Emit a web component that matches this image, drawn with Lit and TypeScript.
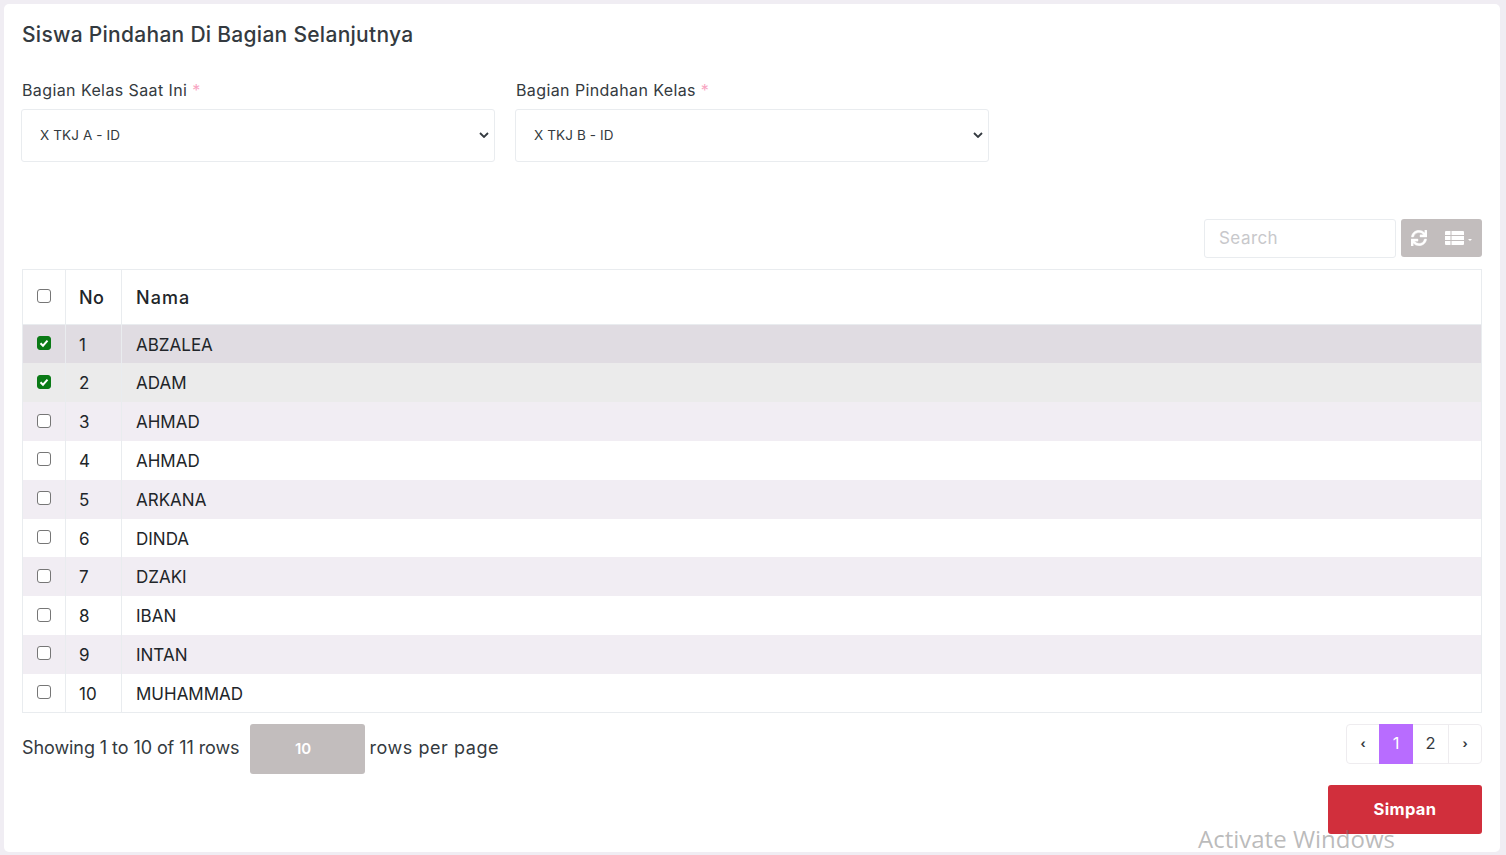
import { LitElement, html, css } from "lit";
import { customElement } from "lit/decorators.js";

const names = ["ABZALEA", "ADAM", "AHMAD", "AHMAD", "ARKANA", "DINDA", "DZAKI", "IBAN", "INTAN", "MUHAMMAD"];

@customElement("app-root")
export class AppRoot extends LitElement {
  static styles = css`
    :host {
      display: block;
      height: 855px;
      box-sizing: border-box;
      padding: 4px 6px 4px 4px;
      background: #f0edf3;
      font-family: Inter, "Noto Sans", sans-serif;
      color: #343a40;
      overflow: hidden;
      position: relative;
    }
    * { box-sizing: border-box; }
    .card {
      height: 848px;
      background: #fff;
      border-radius: 5px;
      padding: 18px 18px 0;
    }
    h1 {
      margin: 0;
      font-size: 21px;
      line-height: 26px;
      font-weight: 500;
      letter-spacing: 0.28px;
      color: #343a40;
    }
    .fields { display: flex; gap: 20px; margin-top: 31px; }
    .field { width: 474px; margin-left: -1px; }
    .field + .field { margin-left: 0; }
    label { display: block; font-size: 16px; line-height: 22px; padding-left: 1px; letter-spacing: 0.4px; }
    label span { color: #f8a5c2; }
    .select {
      height: 53px;
      margin-top: 8px;
      border: 1px solid #e9ecef;
      border-radius: 3px;
      display: flex;
      align-items: center;
      justify-content: space-between;
      padding: 0 5px 1px 18px;
      font-size: 13.5px;
      letter-spacing: 0.1px;
    }
    .select svg { width: 10px; height: 6px; }
    .toolbar { display: flex; justify-content: flex-end; gap: 5px; margin-top: 57px; height: 39px; }
    .search {
      width: 192px;
      height: 39px;
      border: 1px solid #e9ecef;
      border-radius: 3px;
      padding: 0 14px;
      font-size: 17px;
      line-height: 37px;
      letter-spacing: 0.45px;
      color: #c8c8cb;
    }
    .tools {
      width: 81px;
      height: 38px;
      background: #c2bdbd;
      border-radius: 3px;
      display: flex;
      align-items: center;
      padding-left: 10px;
      gap: 18px;
    }
    .caret { width: 0; height: 0; border: 2px solid transparent; border-top-color: #fff; margin: 5px 0 0 -14px; }
    table {
      width: 100%;
      margin-top: 11.2px;
      border-collapse: collapse;
      border: 1px solid #e9ecef;
      color: #212529;
    }
    th, td { border-left: 1px solid #e9ecef; padding: 1px 14px 0 13px; text-align: left; font-size: 17px; }
    th { height: 55px; font-weight: 500; border-bottom: 1px solid #e9ecef; font-size: 18px; padding-left: 14px; }
    th.n { padding-left: 13px; letter-spacing: 0.4px; }
    th.name { letter-spacing: 1.1px; }
    td.name { padding-left: 14px; }
    td { height: 38.8px; }
    .c, th.c { width: 43px; padding: 0; text-align: center; }
    .n { width: 56px; }
    tbody tr:nth-child(odd) { background: #f1edf3; }
    tbody tr.sel1 { background: #e0dce2; }
    tbody tr.sel2 { background: #ebebeb; }
    .box {
      display: block;
      width: 14px;
      height: 14px;
      margin: -3px auto 0;
      border: 1px solid #767676;
      border-radius: 3px;
      background: #fff;
    }
    td .box { margin-top: -2px; }
    .box.on { background: #0a7a16; border-color: #0a7a16; }
    .box svg { display: block; width: 12px; height: 12px; }
    .footer { display: flex; justify-content: space-between; margin-top: 10.8px; }
    .info { display: flex; align-items: center; height: 50px; font-size: 18px; padding-bottom: 3px; }
    .showing { letter-spacing: -0.08px; }
    .perpage { letter-spacing: 0.55px; }
    .size {
      width: 115px;
      height: 50px;
      margin: 0 5px 0 10px;
      background: #c2bdbd;
      border-radius: 3px;
      color: #fff;
      font-size: 15px;
      font-weight: 600;
      display: flex;
      align-items: center;
      justify-content: center;
      padding-right: 8px;
      align-self: flex-start;
    }
    .pages {
      display: flex;
      height: 40px;
      border: 1px solid #eeecef;
      border-radius: 4px;
      font-size: 16.5px;
    }
    .pages div { display: flex; align-items: center; justify-content: center; height: 38px; padding-bottom: 1px; }
    .pages .a { width: 32px; font-size: 12px; font-weight: 700; }
    .pages .on { width: 34px; height: 40px; margin-top: -1px; background: #b86cff; color: #fff; }
    .pages .two { width: 36px; border-right: 1px solid #eeecef; }
    .actions { display: flex; justify-content: flex-end; margin-top: 11px; }
    button {
      width: 154px;
      height: 49px;
      border: 0;
      border-radius: 3px;
      background: #d12f3c;
      color: #fff;
      font: 700 16.5px Inter, sans-serif;
      letter-spacing: 0.35px;
    }
    .wm {
      position: absolute;
      left: 1198px;
      top: 822px;
      font-family: "Open Sans", sans-serif;
      font-size: 24px;
      line-height: 33px;
      color: rgba(120, 120, 120, 0.5);
      white-space: nowrap;
      pointer-events: none;
    }
  `;

  render() {
    const chev = html`<svg viewBox="0 0 10 6"><path d="M1 1l4 4 4-4" fill="none" stroke="#343a40" stroke-width="1.8"/></svg>`;
    const box = (on: boolean) => html`<span class="box ${on ? "on" : ""}">${on ? html`<svg viewBox="0 0 12 12"><path d="M2.5 6.200l2.500 2.500 4.500-5" fill="none" stroke="#fff" stroke-width="2"/></svg>` : ""}</span>`;
    return html`
      <div class="card">
        <h1>Siswa Pindahan Di Bagian Selanjutnya</h1>
        <div class="fields">
          <div class="field"><label>Bagian Kelas Saat Ini <span>*</span></label><div class="select">X TKJ A - ID ${chev}</div></div>
          <div class="field"><label>Bagian Pindahan Kelas <span>*</span></label><div class="select">X TKJ B - ID ${chev}</div></div>
        </div>
        <div class="toolbar">
          <div class="search">Search</div>
          <div class="tools">
            <svg width="16" height="16" viewBox="0 0 512 512"><path fill="#fff" stroke="#fff" stroke-width="14" d="M440.65 12.57l4 82.77A247.16 247.16 0 0 0 255.83 8C134.73 8 33.91 94.92 12.29 209.82A12 12 0 0 0 24.09 224h49.05a12 12 0 0 0 11.67-9.26 175.91 175.91 0 0 1 317-56.94l-101.46-4.86a12 12 0 0 0-12.57 12v47.41a12 12 0 0 0 12 12H500a12 12 0 0 0 12-12V12a12 12 0 0 0-12-12h-47.37a12 12 0 0 0-11.98 12.57zM255.83 432a175.61 175.61 0 0 1-146-77.8l101.8 4.87a12 12 0 0 0 12.57-12v-47.4a12 12 0 0 0-12-12H12a12 12 0 0 0-12 12V500a12 12 0 0 0 12 12h47.35a12 12 0 0 0 12-12.6l-4.15-82.57A247.17 247.17 0 0 0 255.83 504c121.11 0 221.93-86.92 243.55-201.82a12 12 0 0 0-11.8-14.18h-49.05a12 12 0 0 0-11.67 9.26A175.86 175.86 0 0 1 255.83 432z"/></svg>
            <svg width="19" height="14" viewBox="0 0 19 14"><path fill="#fff" d="M1 0h4.500v4H0V1a1 1 0 0 1 1-1zM6.500 0H18a1 1 0 0 1 1 1v3H6.500zM0 5h5.500v4H0zM6.500 5H19v4H6.500zM0 10h5.500v4H1a1 1 0 0 1-1-1zM6.500 10H19v3a1 1 0 0 1-1 1H6.500z"/></svg>
            <span class="caret"></span>
          </div>
        </div>
        <table>
          <thead><tr><th class="c">${box(false)}</th><th class="n">No</th><th class="name">Nama</th></tr></thead>
          <tbody>
            ${names.map((n, i) => html`<tr class="${i === 0 ? "sel1" : i === 1 ? "sel2" : ""}"><td class="c">${box(i < 2)}</td><td class="n">${i + 1}</td><td class="name">${n}</td></tr>`)}
          </tbody>
        </table>
        <div class="footer">
          <div class="info"><span class="showing">Showing 1 to 10 of 11 rows</span><div class="size">10</div><span class="perpage">rows per page</span></div>
          <div class="pages"><div class="a">‹</div><div class="on">1</div><div class="two">2</div><div class="a">›</div></div>
        </div>
        <div class="actions"><button>Simpan</button></div>
      </div>
      <div class="wm">Activate Windows</div>
    `;
  }
}
